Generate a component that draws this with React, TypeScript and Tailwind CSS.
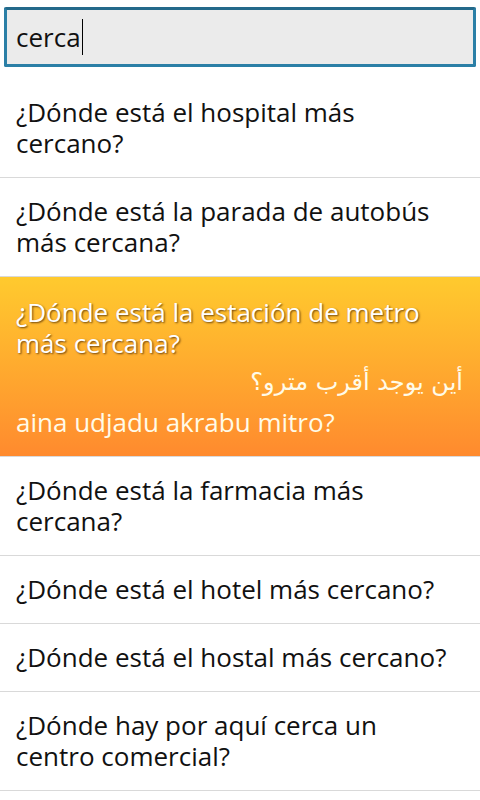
import React from "react";

const font = { fontFamily: '"Open Sans", "Noto Sans", "DejaVu Sans", sans-serif' };

function Row({ text }: { text: string }) {
  return (
    <div className="border-b border-[#d9d9d9] pl-[16px] pr-[24px] py-[18px] text-[26px] leading-[31px] text-[#111]">
      {text}
    </div>
  );
}

export default function App() {
  return (
    <div className="w-[480px] h-[800px] bg-white overflow-hidden" style={font}>
      <div className="px-[4px] pt-[7px] pb-[12px]">
        <div className="h-[60px] border-[3px] border-[#2b7fa6] border-t-[#23698a] bg-[#ebebeb] rounded-[2px] flex items-center pl-[9px]">
          <span className="text-[26px] leading-[31px] text-[#111]">cerca</span>
          <span className="w-[1px] h-[36px] bg-black ml-[1px]" />
        </div>
      </div>
      <Row text="¿Dónde está el hospital más cercano?" />
      <Row text="¿Dónde está la parada de autobús más cercana?" />
      <div className="border-b border-[#d9d9d9] bg-gradient-to-b from-[#ffca2e] to-[#ff8a2e] pl-[16px] pr-[16px] pt-[20px] pb-[18px] text-white">
        <div className="pr-[8px] text-[26px] leading-[31px] [text-shadow:1px_1px_2px_rgba(60,30,0,0.75)]">
          ¿Dónde está la estación de metro más cercana?
        </div>
        <div
          dir="rtl"
          className="mt-[4px] text-[24px] leading-[38px] text-right pr-[1px] text-[#fffbe8]"
          style={{ fontFamily: '"DejaVu Sans", "Noto Sans", sans-serif' }}
        >
          أين يوجد أقرب مترو؟
        </div>
        <div className="mt-[6px] text-[26px] leading-[31px] text-[#fffbe8]">aina udjadu akrabu mitro?</div>
      </div>
      <Row text="¿Dónde está la farmacia más cercana?" />
      <Row text="¿Dónde está el hotel más cercano?" />
      <Row text="¿Dónde está el hostal más cercano?" />
      <Row text="¿Dónde hay por aquí cerca un centro comercial?" />
    </div>
  );
}
